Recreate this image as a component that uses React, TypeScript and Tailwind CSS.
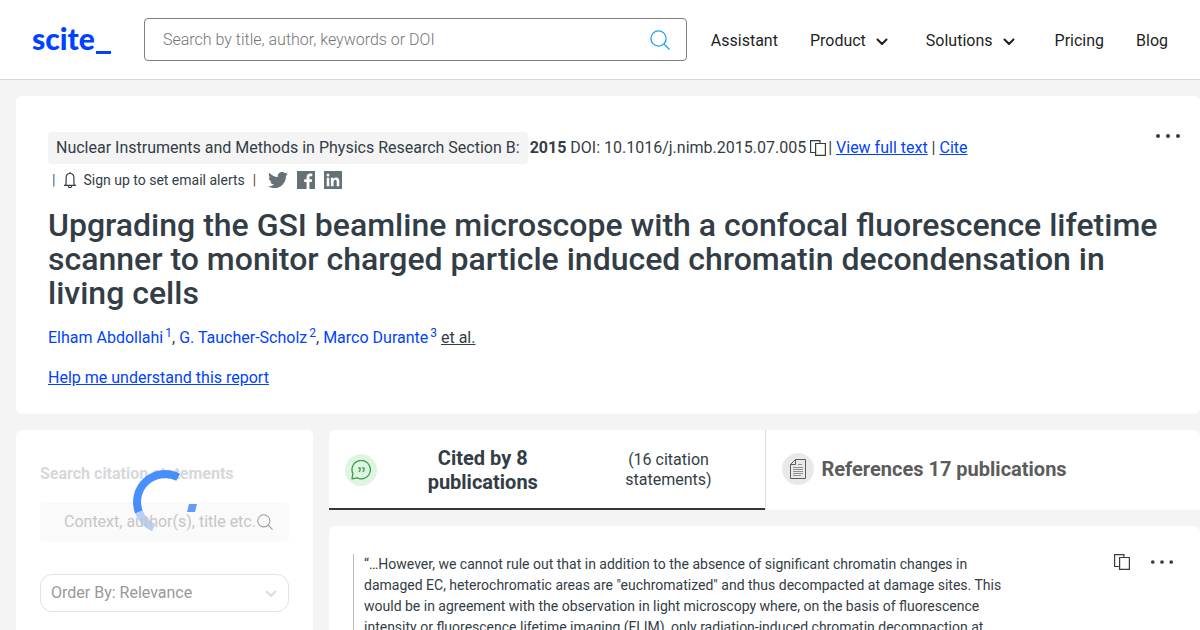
import type { ReactNode } from 'react';

const font = "font-['Roboto','Liberation_Sans',sans-serif]";

const SearchIcon = ({ className }: { className: string }) => (
  <svg viewBox="0 0 20 20" className={className} fill="none" stroke="currentColor" strokeWidth="1.3" aria-hidden="true">
    <circle cx="8.500" cy="8.500" r="7.600" />
    <path d="M14 14l5.500 5.500" />
  </svg>
);

const Chevron = ({ className }: { className: string }) => (
  <svg viewBox="0 0 12 8" className={className} fill="none" stroke="currentColor" strokeWidth="2" strokeLinecap="round" strokeLinejoin="round" aria-hidden="true">
    <path d="M1.500 1.500L6 6l4.500-4.500" />
  </svg>
);

const CopyIcon = () => (
  <svg viewBox="0 0 16 16" className="h-4 w-4" fill="none" stroke="currentColor" strokeWidth="1.200" aria-hidden="true">
    <path d="M5 12.500H.6V.6h9.300V3" />
    <path d="M5.600 3.500h9.800v11.900H5.600z" />
  </svg>
);

const Dots = ({ className }: { className: string }) => (
  <svg viewBox="0 0 26 6" className={className} fill="#333d46" aria-hidden="true">
    <circle cx="3" cy="3" r="2" />
    <circle cx="13" cy="3" r="2" />
    <circle cx="23" cy="3" r="2" />
  </svg>
);

const BellIcon = () => (
  <svg viewBox="0 0 14 18" className="h-[18px] w-[14px]" fill="none" stroke="currentColor" strokeWidth="1.200" aria-hidden="true">
    <path d="M7 1v1.500M1 14.400h12M2.600 14.400c.4-1 .5-2 .5-3.400V6.800C3.100 4.200 4.700 2.500 7 2.500s3.900 1.700 3.900 4.300V11c0 1.400.1 2.400.5 3.400M5.300 15.200c.2 1 .8 1.500 1.700 1.500s1.500-.5 1.700-1.500" />
  </svg>
);

const TwitterIcon = () => (
  <svg viewBox="0 0 512 512" className="h-5 w-5" fill="currentColor" aria-hidden="true">
    <path d="M459.370 151.716c.325 4.548.325 9.097.325 13.645 0 138.720-105.583 298.558-298.558 298.558-59.452 0-114.680-17.219-161.137-47.106 8.447.974 16.568 1.299 25.340 1.299 49.055 0 94.213-16.568 130.274-44.832-46.132-.975-84.792-31.188-98.112-72.772 6.498.974 12.995 1.624 19.818 1.624 9.421 0 18.843-1.300 27.614-3.573-48.081-9.747-84.143-51.980-84.143-102.985v-1.299c13.969 7.797 30.214 12.670 47.431 13.319-28.264-18.843-46.781-51.005-46.781-87.391 0-19.492 5.197-37.360 14.294-52.954 51.655 63.675 129.300 105.258 216.365 109.807-1.624-7.797-2.599-15.918-2.599-24.040 0-57.828 46.782-104.934 104.934-104.934 30.213 0 57.502 12.670 76.670 33.137 23.715-4.548 46.456-13.320 66.599-25.340-7.798 24.366-24.366 44.833-46.132 57.827 21.117-2.273 41.584-8.122 60.426-16.243-14.292 20.791-32.161 39.308-52.628 54.253z" />
  </svg>
);

const FacebookIcon = () => (
  <svg viewBox="0 0 18 18" className="h-[18px] w-[18px]" fill="currentColor" aria-hidden="true">
    <path d="M0 0h18v18h-5.600v-6.900h2.400l.4-2.800h-2.800V6.600c0-.9.3-1.400 1.500-1.400h1.400V2.700c-.3 0-1.100-.1-2-.1-2.200 0-3.700 1.300-3.700 3.700v2H7.200v2.800h2.400V18H0z" />
  </svg>
);

const LinkedinIcon = () => (
  <svg viewBox="0 0 18 18" className="h-[18px] w-[18px]" aria-hidden="true">
    <path d="M0 0h18v18H0z" fill="currentColor" />
    <g fill="#fff">
      <circle cx="4" cy="4.100" r="1.500" />
      <path d="M2.700 6.800h2.600v8.500H2.700zM6.900 6.800h2.500V8c.4-.7 1.300-1.400 2.600-1.400 2.700 0 3.300 1.700 3.300 4v4.700h-2.600v-4.200c0-1 0-2.300-1.400-2.300s-1.700 1.100-1.700 2.200v4.300H6.900z" />
    </g>
  </svg>
);

const QuoteIcon = () => (
  <svg viewBox="0 0 20 20" className="h-5 w-5" fill="none" stroke="#35a047" strokeWidth="1.300" strokeLinejoin="round" aria-hidden="true">
    <path d="M1 18.800l.9-5.200A9.200 9.200 0 1 1 6.200 17.900z" />
    <path d="M7.300 8h1.800v2.300L7.900 12M11.200 8H13v2.300L11.800 12" />
  </svg>
);

const DocumentIcon = () => (
  <svg viewBox="0 0 16 20" className="h-5 w-4" fill="none" stroke="#5c5c5c" strokeWidth="1" aria-hidden="true">
    <path d="M5.500.5h10v19H.5v-14zM5.500.5v5h-5" />
    <path d="M8 5.500h4M3 8.500h10M3 10.500h10M3 12.500h10M3 14.500h10M3 16.500h8" stroke="#909090" />
  </svg>
);

const Spinner = () => (
  <svg viewBox="0 0 64 64" className="absolute left-[117px] top-10 h-16 w-16" fill="none" strokeWidth="8" aria-hidden="true">
    <path d="M45.200 7.300A28 28 0 0 0 5.900 42" stroke="#3d88ff" opacity=".94" />
    <path d="M5.900 42A28 28 0 0 0 20.700 57.600" stroke="#bcd5fe" />
    <path d="M56 34h8l-2 8h-8z" fill="#659fff" />
  </svg>
);

const NavItem = ({ children, menu }: { children: ReactNode; menu?: boolean }) =>
  menu ? (
    <button type="button" className="flex items-center gap-2.5">
      {children}
      <Chevron className="mt-0.5 h-2 w-3" />
    </button>
  ) : (
    <a href="#">{children}</a>
  );

const Header = () => (
  <header className="flex h-20 shrink-0 items-center border-b border-[#d8d8d8] bg-white px-8 text-[#1f1f1f]">
    <a href="#" className="flex w-28 shrink-0 items-end pb-1 font-['Lato',sans-serif] text-[30px] leading-8 font-black text-[#0043ff]">
      scite
      <svg viewBox="0 0 16 3" className="h-[3px] w-4" fill="currentColor" aria-hidden="true">
        <path d="M1 0h15v3H1z" />
      </svg>
    </a>
    <form className="flex h-[43px] flex-1 items-center rounded border border-[#808080] pr-4 pl-[18px]">
      <input
        type="search"
        aria-label="Search"
        placeholder="Search by title, author, keywords or DOI"
        className="min-w-0 flex-1 font-light outline-none placeholder:text-[#757575]"
      />
      <button type="button" aria-label="Submit search" className="text-[#1ba1f2]">
        <SearchIcon className="h-5 w-5" />
      </button>
    </form>
    <nav className="ml-6 flex items-center pt-0.5">
      <NavItem>Assistant</NavItem>
      <div className="ml-8 flex gap-[38px]">
        <NavItem menu>Product</NavItem>
        <NavItem menu>Solutions</NavItem>
      </div>
      <div className="ml-10 flex gap-8">
        <NavItem>Pricing</NavItem>
        <NavItem>Blog</NavItem>
      </div>
    </nav>
  </header>
);

const Paper = () => (
  <section className="relative rounded-md bg-white px-8 pt-9 pb-6">
    <button type="button" aria-label="More options" className="absolute top-9 right-[19px]">
      <Dots className="h-2 w-[26px]" />
    </button>
    <div className="flex h-8 items-center">
      <span className="flex h-8 items-center rounded bg-[#f4f4f4] px-2">
        Nuclear Instruments and Methods in Physics Research Section B:
      </span>
      <span className="ml-0.5">
        <b>2015</b> DOI: 10.1016/j.nimb.2015.07.005
      </span>
      <button type="button" aria-label="Copy DOI" className="ml-1">
        <CopyIcon />
      </button>
      <span className="ml-0.5">
        | <a href="#" className="text-[#0043ff] underline">View full text</a> |{' '}
        <a href="#" className="text-[#0043ff] underline">Cite</a>
      </span>
    </div>
    <div className="flex h-8 items-center pl-1 text-sm">
      <span className="text-[#2a6496]">|</span>
      <button type="button" className="ml-2 flex items-center gap-1.5">
        <BellIcon />
        Sign up to set email alerts
      </button>
      <span className="ml-2 text-[#6b3a2a]">|</span>
      <div className="ml-3 flex items-center gap-[9px] text-[#667077]">
        <a href="#" aria-label="Twitter"><TwitterIcon /></a>
        <a href="#" aria-label="Facebook"><FacebookIcon /></a>
        <a href="#" aria-label="LinkedIn"><LinkedinIcon /></a>
      </div>
    </div>
    <h1 className="mt-3 text-[32px] leading-[34px] font-medium">
      Upgrading the GSI beamline microscope with a confocal fluorescence lifetime scanner to monitor charged particle induced chromatin decondensation in living cells
    </h1>
    <p className="mt-4 leading-6">
      <a href="#" className="text-[#0043ff]">Elham Abdollahi<sup className="ml-0.5 text-xs">1</sup></a>,{' '}
      <a href="#" className="text-[#0043ff]">G. Taucher-Scholz<sup className="ml-0.5 text-xs">2</sup></a>,{' '}
      <a href="#" className="text-[#0043ff]">Marco Durante<sup className="ml-0.5 text-xs">3</sup></a>{' '}
      <button type="button" className="underline">et al.</button>
    </p>
    <a href="#" className="mt-4 inline-block leading-6 text-[#0043ff] underline">Help me understand this report</a>
  </section>
);

const Sidebar = () => (
  <aside className="relative w-[297px] shrink-0 rounded-md bg-white px-6 pt-8">
    <label htmlFor="statement-search" className="block leading-6 font-bold text-[#d6d8da]">
      Search citation statements
    </label>
    <Spinner />
    <div className="relative mt-4 flex h-10 items-center rounded bg-black/2 pr-4 pl-6">
      <input
        id="statement-search"
        placeholder="Context, author(s), title etc."
        className="min-w-0 flex-1 outline-none placeholder:text-[#c6c6c6]"
      />
      <button type="button" aria-label="Search statements" className="text-[#999]">
        <SearchIcon className="h-4 w-4" />
      </button>
    </div>
    <div className="relative mt-8">
      <select aria-label="Order by" className="h-[38px] w-full appearance-none rounded-xl border border-[#e2e2e2] bg-white px-2.5 text-[#999]">
        <option>Order By: Relevance</option>
      </select>
      <Chevron className="pointer-events-none absolute top-4 right-3 h-2 w-3 text-[#ddd]" />
    </div>
  </aside>
);

const Tabs = () => (
  <div className="flex h-20 rounded-t-md bg-white">
    <button type="button" className="flex w-1/2 items-center border-b-2 border-[#333840] px-4 pt-0.5">
      <span className="flex h-8 w-8 shrink-0 items-center justify-center rounded-full bg-[#dff5e1]">
        <QuoteIcon />
      </span>
      <span className="flex-1 px-12 text-xl leading-6 font-bold">Cited by 8 publications</span>
      <span className="w-40 px-8 text-base leading-5">(16 citation statements)</span>
    </button>
    <button type="button" className="flex w-1/2 items-center gap-2 border-l border-[#dcdcdc] pb-0.5 pl-4 text-[#5c5c5c]">
      <span className="flex h-8 w-8 items-center justify-center rounded-full bg-[#e9e9e9]">
        <DocumentIcon />
      </span>
      <span className="text-xl font-bold">References 17 publications</span>
    </button>
  </div>
);

const Statement = () => (
  <article className="flex flex-1 items-start justify-between rounded-md bg-white pt-7 pr-[26px] pl-6">
    <blockquote className="max-w-[664px] border-l border-[#bbb] pl-2.5 text-sm leading-[21px]">
      “…However, we cannot rule out that in addition to the absence of significant chromatin changes in damaged EC, heterochromatic areas are "euchromatized" and thus decompacted at damage sites. This would be in agreement with the observation in light microscopy where, on the basis of fluorescence intensity or fluorescence lifetime imaging (FLIM), only radiation-induced chromatin decompaction at
    </blockquote>
    <div className="flex items-center gap-5">
      <button type="button" aria-label="Copy statement"><CopyIcon /></button>
      <button type="button" aria-label="Statement options"><Dots className="h-2 w-6" /></button>
    </div>
  </article>
);

export default function App() {
  return (
    <div className={`flex h-screen flex-col overflow-hidden bg-[#f4f4f4] text-base text-[#333d46] ${font}`}>
      <Header />
      <main className="flex flex-1 flex-col gap-4 pt-4 pl-4">
        <Paper />
        <div className="flex flex-1 gap-4">
          <Sidebar />
          <div className="flex min-w-0 flex-1 flex-col gap-4">
            <Tabs />
            <Statement />
          </div>
        </div>
      </main>
    </div>
  );
}
